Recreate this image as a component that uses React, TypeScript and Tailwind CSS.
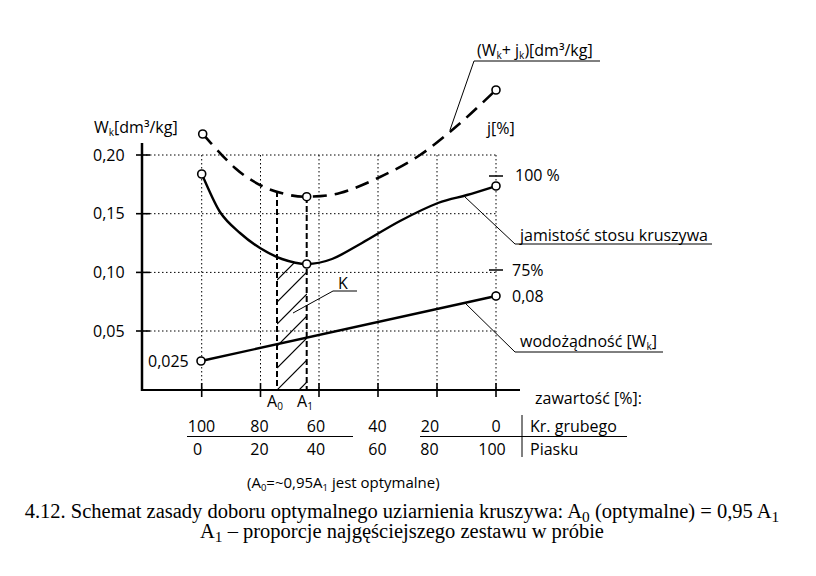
import React from "react";

type Pt = [number, number];

// catmull-rom through the points, as cubic beziers
function smooth(pts: Pt[]) {
  let d = `M${pts[0][0]},${pts[0][1]}`;
  for (let i = 0; i < pts.length - 1; i++) {
    const p0 = pts[i - 1] || pts[i];
    const p1 = pts[i];
    const p2 = pts[i + 1];
    const p3 = pts[i + 2] || p2;
    const c1x = p1[0] + (p2[0] - p0[0]) / 6;
    const c1y = p1[1] + (p2[1] - p0[1]) / 6;
    const c2x = p2[0] - (p3[0] - p1[0]) / 6;
    const c2y = p2[1] - (p3[1] - p1[1]) / 6;
    d += ` C${c1x.toFixed(1)},${c1y.toFixed(1)} ${c2x.toFixed(1)},${c2y.toFixed(1)} ${p2[0]},${p2[1]}`;
  }
  return d;
}

const sumCurve: Pt[] = [
  [202.7, 134],
  [235, 168],
  [262, 186],
  [285, 194],
  [306.7, 196.7],
  [340, 193],
  [380, 177],
  [420, 155],
  [458, 125],
  [496, 90],
];

const jCurve: Pt[] = [
  [201.7, 174],
  [220, 212],
  [240, 233],
  [260, 248],
  [282, 259],
  [306.7, 264],
  [332, 259],
  [362, 243],
  [400, 221],
  [438, 203],
  [467, 195],
  [496, 186],
];

const gridX = [201.7, 260.5, 319, 378, 437, 496];
const gridY = [155, 213.7, 272.4, 331];

const row1 = [
  { x: 201.5, t: "100" },
  { x: 259.5, t: "80" },
  { x: 316, t: "60" },
  { x: 377.5, t: "40" },
  { x: 430, t: "20" },
  { x: 496, t: "0" },
];
const row2 = [
  { x: 197.5, t: "0" },
  { x: 259.5, t: "20" },
  { x: 316, t: "40" },
  { x: 377.5, t: "60" },
  { x: 429.5, t: "80" },
  { x: 492, t: "100" },
];

function Chart() {
  const hatch: number[] = [];
  for (let y = 412; y > 250; y -= 22) hatch.push(y);

  return (
    <svg width={816} height={500} viewBox="0 0 816 500" className="block">
      <defs>
        <clipPath id="strip">
          <polygon points="277,259 290,262 307,264 307,390 277,390" />
        </clipPath>
      </defs>

      {/* grid */}
      <g stroke="#000" strokeWidth={1} strokeDasharray="1.5 2.5">
        {gridY.map((y) => (
          <line key={y} x1={142} y1={y} x2={496} y2={y} />
        ))}
        {gridX.map((x) => (
          <line key={x} x1={x} y1={155} x2={x} y2={390} />
        ))}
      </g>

      {/* axes */}
      <g stroke="#000" fill="none">
        <line x1={142} y1={143} x2={142} y2={391} strokeWidth={2.5} />
        <line x1={141} y1={390} x2={520} y2={390} strokeWidth={2.2} />
        {gridY.map((y) => (
          <line key={y} x1={136} y1={y} x2={150} y2={y} strokeWidth={1.6} />
        ))}
        {gridX.map((x) => (
          <line key={x} x1={x} y1={383} x2={x} y2={397} strokeWidth={1.6} />
        ))}
        <line x1={489} y1={176} x2={503} y2={176} strokeWidth={1.5} />
        <line x1={489} y1={270} x2={503} y2={270} strokeWidth={1.5} />
      </g>

      {/* hatched strip K */}
      <g clipPath="url(#strip)" stroke="#000" strokeWidth={1.2}>
        {hatch.map((y) => (
          <line key={y} x1={277} y1={y} x2={307} y2={y - 30} />
        ))}
      </g>
      <g stroke="#000" strokeWidth={2} strokeDasharray="6 3">
        <line x1={277} y1={191} x2={277} y2={390} />
        <line x1={306.7} y1={197} x2={306.7} y2={390} />
      </g>

      {/* curves */}
      <path
        d={smooth(sumCurve)}
        fill="none"
        stroke="#000"
        strokeWidth={2.6}
        strokeDasharray="14 8"
      />
      <path d={smooth(jCurve)} fill="none" stroke="#000" strokeWidth={2.4} />
      <line
        x1={201}
        y1={361}
        x2={496}
        y2={296}
        stroke="#000"
        strokeWidth={2.4}
      />

      {/* leaders */}
      <g stroke="#000" strokeWidth={1} fill="none">
        <polyline points="450,130 474,61 600,61" />
        <polyline points="465,197 515,244 712,244" />
        <polyline points="465,303 515,352 663,352" />
        <polyline points="293,313 333,291 357,291" />
        <line x1={522} y1={415} x2={522} y2={457} />
        <line x1={187} y1={436.5} x2={353} y2={436.5} />
        <line x1={420} y1={436.5} x2={627} y2={436.5} />
      </g>

      {/* points */}
      <g fill="#fff" stroke="#000" strokeWidth={1.6}>
        {[
          [202.7, 134],
          [306.7, 196.7],
          [496, 90],
          [201.7, 174],
          [306.7, 264],
          [496, 186],
          [201, 361],
          [496, 296],
        ].map(([x, y]) => (
          <circle key={`${x}-${y}`} cx={x} cy={y} r={4} />
        ))}
      </g>

      {/* labels */}
      <g fontFamily="'Open Sans', 'DejaVu Sans', sans-serif" fontSize={16} fill="#000">
        <text x={94} y={133}>
          W<tspan fontSize={10} dy={3}>k</tspan>
          <tspan dy={-3}>[dm³/kg]</tspan>
        </text>
        <text x={93} y={160.5}>0,20</text>
        <text x={93} y={219}>0,15</text>
        <text x={93} y={278}>0,10</text>
        <text x={93} y={336.5}>0,05</text>
        <text x={148} y={366.5}>0,025</text>
        <text x={267} y={407}>
          A<tspan fontSize={10} dy={3}>0</tspan>
        </text>
        <text x={297} y={407}>
          A<tspan fontSize={10} dy={3}>1</tspan>
        </text>
        <text x={338} y={289}>K</text>
        <text x={477} y={56}>
          (W<tspan fontSize={10} dy={3}>k</tspan>
          <tspan dy={-3}>+ j</tspan>
          <tspan fontSize={10} dy={3}>k</tspan>
          <tspan dy={-3}>)[dm³/kg]</tspan>
        </text>
        <text x={487} y={134}>j[%]</text>
        <text x={515} y={181}>100 %</text>
        <text x={520} y={240.5}>jamistość stosu kruszywa</text>
        <text x={512} y={276}>75%</text>
        <text x={512} y={301.5}>0,08</text>
        <text x={520} y={347}>
          wodożądność [W<tspan fontSize={10} dy={3}>k</tspan>
          <tspan dy={-3}>]</tspan>
        </text>
        <text x={535} y={404}>zawartość [%]:</text>
        {row1.map((r) => (
          <text key={`a${r.x}`} x={r.x} y={432} textAnchor="middle">
            {r.t}
          </text>
        ))}
        {row2.map((r) => (
          <text key={`b${r.x}`} x={r.x} y={455} textAnchor="middle">
            {r.t}
          </text>
        ))}
        <text x={530} y={432}>Kr. grubego</text>
        <text x={530} y={455}>Piasku</text>
        <text x={247} y={488} fontSize={15}>
          (A<tspan fontSize={9.5} dy={3}>0</tspan>
          <tspan dy={-3}>=~0,95A</tspan>
          <tspan fontSize={9.5} dy={3}>1</tspan>
          <tspan dy={-3}> jest optymalne)</tspan>
        </text>
      </g>
    </svg>
  );
}

export default function App() {
  return (
    <div className="w-[816px] h-[576px] bg-white text-black overflow-hidden">
      <Chart />
      <div className="pt-[1px] pr-[12px] text-center font-['Liberation_Serif',serif] text-[20.5px] leading-[20px]">
        <p>
          4.12. Schemat zasady doboru optymalnego uziarnienia kruszywa: A
          <sub>0</sub> (optymalne) = 0,95 A<sub>1</sub>
        </p>
        <p>
          A<sub>1</sub> – proporcje najgęściejszego zestawu w próbie
        </p>
      </div>
    </div>
  );
}
